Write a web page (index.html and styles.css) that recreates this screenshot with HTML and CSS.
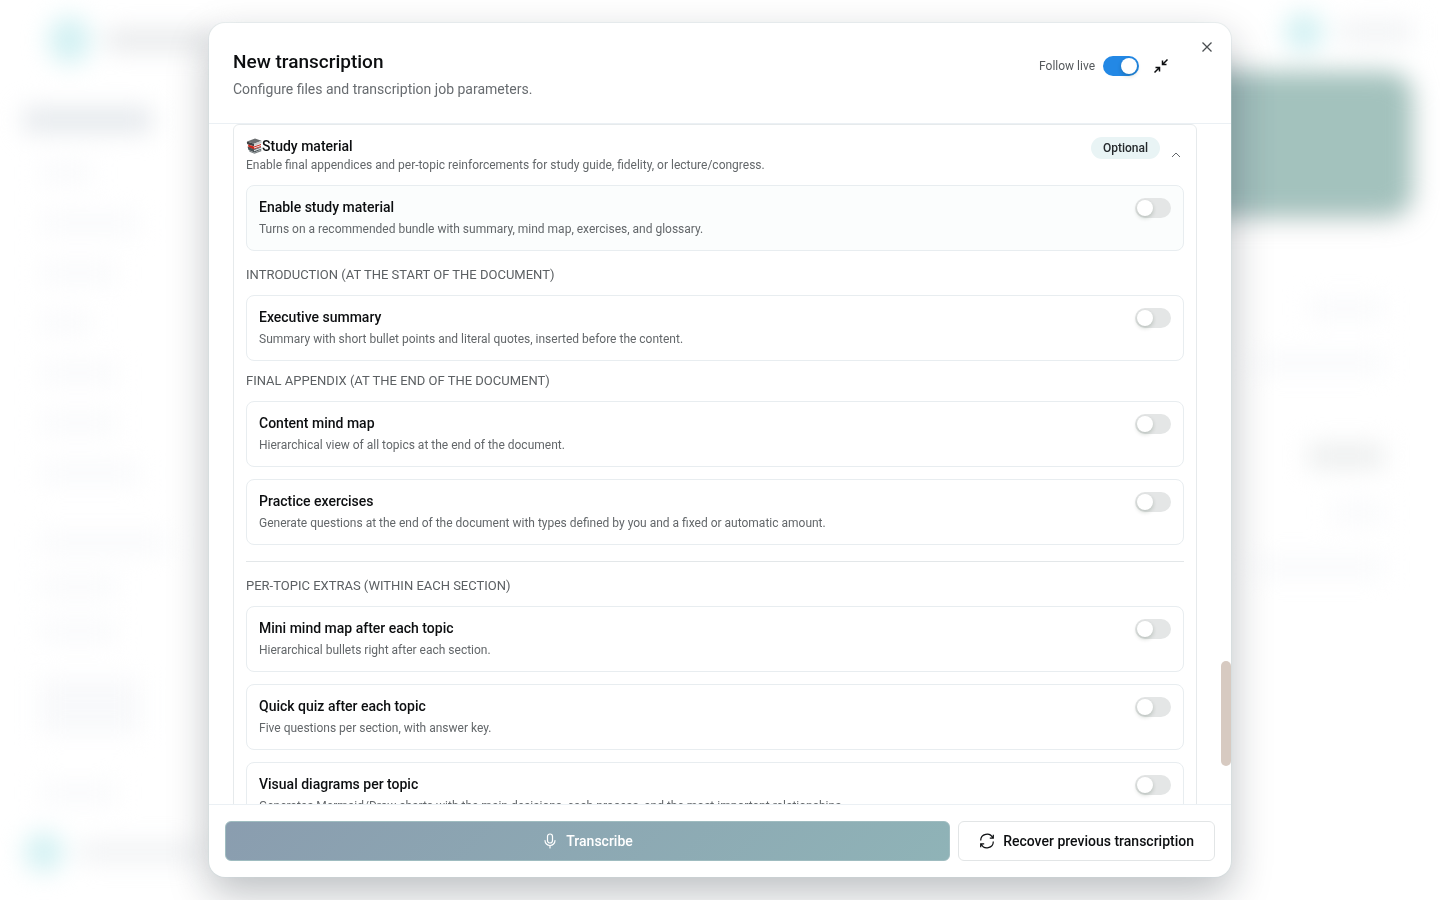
FILE: index.html
```html
<!DOCTYPE html>
<html lang="en">
<head>
    <meta charset="UTF-8">
    <meta name="viewport" content="width=device-width, initial-scale=1.0">
    <title>New transcription</title>
    <link rel="stylesheet" href="styles.css">
</head>
<body>

<!-- Page behind the dialog -->
<div class="page" aria-hidden="true">
    <div class="sidebar">
        <div class="brand"><span class="dot"></span><span class="bar strong"></span></div>
        <div class="nav">
            <span class="item active"></span>
            <span class="item short"></span>
            <span class="item long"></span>
            <span class="item"></span>
            <span class="item short"></span>
            <span class="item"></span>
            <span class="item"></span>
            <span class="item long"></span>
        </div>
        <div class="nav secondary">
            <span class="item wide"></span>
            <span class="item"></span>
            <span class="item"></span>
            <span class="item block"></span>
            <span class="item"></span>
        </div>
        <div class="user"><span class="dot small"></span><span class="bar"></span></div>
    </div>
    <div class="main">
        <div class="topbar"><span class="dot small"></span><span class="bar"></span></div>
        <div class="hero"></div>
        <div class="rows">
            <span class="item"></span>
            <span class="item wide"></span>
            <span class="item pill"></span>
            <span class="item short"></span>
            <span class="item wide"></span>
        </div>
    </div>
</div>

<!-- Dialog -->
<div class="overlay">
    <div class="modal" role="dialog" aria-modal="true" aria-labelledby="modal-title">
        <header class="modal-header">
            <div>
                <h1 id="modal-title">New transcription</h1>
                <p>Configure files and transcription job parameters.</p>
            </div>
            <div class="header-tools">
                <label for="follow">Follow live</label>
                <input type="checkbox" class="switch" id="follow" checked>
                <button class="icon-button" aria-label="Collapse">
                    <svg width="16" height="16" viewBox="0 0 16 16" fill="none" stroke="currentColor" stroke-width="1.5">
                        <path d="M14.5 1.5 9.5 6.5M9.5 2.5v4h4M1.5 14.5l5-5M2.5 9.5h4v4"/>
                    </svg>
                </button>
            </div>
            <button class="close-button" aria-label="Close">
                <svg width="12" height="12" viewBox="0 0 12 12" fill="none" stroke="currentColor" stroke-width="1.3">
                    <path d="M1.5 1.5l9 9M10.5 1.5l-9 9"/>
                </svg>
            </button>
        </header>

        <div class="modal-body">
            <section class="panel">
                <div class="panel-header">
                    <div>
                        <h2>
                            <svg width="16" height="16" viewBox="0 0 16 16">
                                <path d="M1 3.5 9 .5l6.5 2.2-7.5 3z" fill="#6b6e70"/>
                                <path d="M1 3.5 8 5.7v2.6L2 6.5C.8 6 .7 4.5 1 3.5z" fill="#3f4244"/>
                                <path d="M8 5.7l7.5-3v2.2L8.3 8z" fill="#c9cccd"/>
                                <path d="M2 6.5l6 2 7-2.5v2.7l-7 2.7-5.5-2z" fill="#c9281c"/>
                                <path d="M8 9.5l7-2.5v1l-7 2.5z" fill="#eee"/>
                                <path d="M1.5 8.6 8 11.3l7-2.3.3 2.5-7 3L2.5 12z" fill="#4a5357"/>
                                <path d="M8 12l7.3-2.5v1.2L8 13.3z" fill="#dfe2e3"/>
                                <path d="M3 12.2l5.3 2.3 7-2.8v1.5l-6.8 2.5-5-1.9z" fill="#7d8486"/>
                            </svg>Study material
                        </h2>
                        <p>Enable final appendices and per-topic reinforcements for study guide, fidelity, or lecture/congress.</p>
                    </div>
                    <div class="panel-side">
                        <span class="badge">Optional</span>
                        <button class="chevron" aria-label="Collapse section">
                            <svg width="10" height="6" viewBox="0 0 10 6" fill="none" stroke="currentColor"><path d="M1 5l4-4 4 4"/></svg>
                        </button>
                    </div>
                </div>

                <div class="card tinted">
                    <div>
                        <label for="study">Enable study material</label>
                        <p>Turns on a recommended bundle with summary, mind map, exercises, and glossary.</p>
                    </div>
                    <input type="checkbox" class="switch" id="study">
                </div>

                <div class="group">
                    <h3>Introduction (at the start of the document)</h3>
                    <div class="card">
                        <div>
                            <label for="summary">Executive summary</label>
                            <p>Summary with short bullet points and literal quotes, inserted before the content.</p>
                        </div>
                        <input type="checkbox" class="switch" id="summary">
                    </div>

                    <h3>Final appendix (at the end of the document)</h3>
                    <div class="card">
                        <div>
                            <label for="mindmap">Content mind map</label>
                            <p>Hierarchical view of all topics at the end of the document.</p>
                        </div>
                        <input type="checkbox" class="switch" id="mindmap">
                    </div>
                    <div class="card">
                        <div>
                            <label for="exercises">Practice exercises</label>
                            <p>Generate questions at the end of the document with types defined by you and a fixed or automatic amount.</p>
                        </div>
                        <input type="checkbox" class="switch" id="exercises">
                    </div>
                </div>

                <div class="group divided">
                    <h3>Per-topic extras (within each section)</h3>
                    <div class="card">
                        <div>
                            <label for="mini">Mini mind map after each topic</label>
                            <p>Hierarchical bullets right after each section.</p>
                        </div>
                        <input type="checkbox" class="switch" id="mini">
                    </div>
                    <div class="card">
                        <div>
                            <label for="quiz">Quick quiz after each topic</label>
                            <p>Five questions per section, with answer key.</p>
                        </div>
                        <input type="checkbox" class="switch" id="quiz">
                    </div>
                    <div class="card">
                        <div>
                            <label for="diagrams">Visual diagrams per topic</label>
                            <p>Generates Mermaid/Draw charts with the main decisions, each process, and the most important relationships.</p>
                        </div>
                        <input type="checkbox" class="switch" id="diagrams">
                    </div>
                </div>
            </section>
            <span class="scroll-thumb"></span>
        </div>

        <footer class="modal-footer">
            <button class="btn primary">
                <svg width="16" height="16" viewBox="0 0 16 16" fill="none" stroke="currentColor" stroke-width="1.2" stroke-linecap="round">
                    <rect x="5.5" y="1" width="5" height="9" rx="2.5"/>
                    <path d="M3 7.5a5 5 0 0 0 10 0M8 12.5V15"/>
                </svg>
                Transcribe
            </button>
            <button class="btn">
                <svg width="16" height="16" viewBox="0 0 16 16" fill="none" stroke="currentColor" stroke-width="1.2">
                    <path d="M1.7 7.5A6.3 6.3 0 0 1 13.8 5M14.3 1.7v3.5h-3.5M14.3 8.5A6.3 6.3 0 0 1 2.2 11M1.7 14.3v-3.5h3.5"/>
                </svg>
                Recover previous transcription
            </button>
        </footer>
    </div>
</div>

</body>
</html>
```
FILE: styles.css
```css
* {
    box-sizing: border-box;
}

body {
    margin: 0;
    height: 100vh;
    overflow: hidden;
    font-family: Roboto, "Liberation Sans", sans-serif;
    font-size: 14px;
    color: #0c0e10;
    background-color: #fff;
}

h1, h2, h3, p {
    margin: 0;
}

button {
    font: inherit;
    color: inherit;
    background: none;
    border: none;
    padding: 0;
    cursor: pointer;
}

svg {
    display: block;
    flex: none;
}

/* Blurred page */
.page {
    display: flex;
    height: 100vh;
    filter: blur(12px);
}

.sidebar {
    display: flex;
    flex-direction: column;
    width: 240px;
    padding: 16px 24px 28px;
}

.brand, .user, .topbar {
    display: flex;
    align-items: center;
    gap: 16px;
}

.brand {
    padding-left: 24px;
}

.user {
    margin-top: auto;
}

.dot {
    width: 48px;
    height: 48px;
    border-radius: 50%;
    background-color: #d3f1f3;
}

.dot.small {
    width: 40px;
    height: 40px;
}

.bar {
    width: 120px;
    height: 20px;
    background-color: #f0f2f4;
}

.topbar .bar {
    width: 72px;
}

.bar.strong {
    background-color: #e6e8ea;
}

.nav {
    display: flex;
    flex-direction: column;
    gap: 32px;
    padding-top: 44px;
}

.nav.secondary {
    gap: 26px;
    padding-top: 52px;
}

.item {
    width: 76px;
    height: 18px;
    margin-left: 16px;
    background-color: #f8f9fb;
}

.item.active {
    width: 128px;
    height: 24px;
    margin-left: 0;
    background-color: #e4e8ec;
}

.item.short {
    width: 52px;
}

.item.long {
    width: 100px;
}

.item.wide {
    width: 128px;
}

.item.block {
    width: 100px;
    height: 56px;
    margin-top: 12px;
    margin-bottom: 24px;
}

.main {
    flex: 1;
    padding: 12px 28px;
}

.topbar {
    justify-content: flex-end;
}

.hero {
    height: 144px;
    margin-top: 20px;
    border-radius: 24px;
    background: linear-gradient(90deg, #8da4b4 70%, #a3c2bd 88%);
    box-shadow: 0 4px 12px rgba(90, 60, 70, 0.2);
}

.rows {
    display: flex;
    flex-direction: column;
    align-items: flex-end;
    gap: 36px;
    padding: 84px 28px;
}

.item.pill {
    height: 24px;
    margin-top: 36px;
    background-color: #eceeee;
}

/* Dialog */
.overlay {
    position: fixed;
    inset: 0;
    display: flex;
    justify-content: center;
    padding: 23px;
}

.modal {
    display: flex;
    flex-direction: column;
    width: 100%;
    max-width: 1022px;
    overflow: hidden;
    background-color: #fff;
    border-radius: 16px;
    box-shadow: 0 0 0 1px rgba(200, 215, 220, 0.3), 0 16px 40px rgba(15, 25, 35, 0.28);
}

.modal-header {
    position: relative;
    display: flex;
    justify-content: space-between;
    align-items: flex-start;
    padding: 25px 56px 22px 24px;
    border-bottom: 1px solid #ebf0f4;
}

h1 {
    font-size: 19px;
    line-height: 28px;
    font-weight: 500;
}

.modal-header p {
    padding-top: 1px;
    font-size: 14px;
    line-height: 24px;
    color: #686c70;
}

.header-tools {
    display: flex;
    align-items: center;
    gap: 8px;
    padding-top: 4px;
    font-size: 12px;
    color: #55595c;
}

.icon-button {
    padding: 6px;
    color: #0c0e10;
}

.close-button {
    position: absolute;
    top: 18px;
    right: 18px;
    color: #4a4e51;
}

.switch {
    appearance: none;
    flex: none;
    width: 36px;
    height: 20px;
    margin: 0;
    padding: 2px;
    border-radius: 10px;
    background-color: #e4e6e6;
    cursor: pointer;
}

.switch::before {
    content: "";
    display: block;
    width: 16px;
    height: 16px;
    border-radius: 50%;
    background-color: #fff;
    box-shadow: 0 2px 4px rgba(0, 35, 11, 0.2);
}

.switch:checked {
    background-color: #2388e5;
}

.switch:checked::before {
    margin-left: 16px;
}

.modal-body {
    position: relative;
    flex: 1;
    min-height: 0;
    overflow: hidden;
    padding: 0 34px 0 24px;
}

.panel {
    padding: 12px;
    border: 1px solid #e6eaec;
    border-radius: 6px;
}

.panel-header {
    display: flex;
    justify-content: space-between;
    padding-bottom: 10px;
}

h2 {
    display: flex;
    align-items: center;
    font-size: 14px;
    line-height: 18px;
    font-weight: 500;
}

.panel-header p {
    font-size: 12px;
    line-height: 20px;
    color: #63676a;
}

.panel-side {
    display: flex;
    align-items: flex-start;
    gap: 8px;
}

.badge {
    padding: 0 12px;
    border-radius: 11px;
    font-size: 12px;
    line-height: 22px;
    font-weight: 500;
    color: #25292c;
    background-color: #e9f4f5;
}

.chevron {
    padding: 15px 3px 0;
    color: #63676a;
}

.card {
    display: flex;
    justify-content: space-between;
    align-items: flex-start;
    padding: 12px;
    border: 1px solid #e8edf0;
    border-radius: 8px;
}

.card.tinted {
    background-color: #fbfdfd;
}

.card > div {
    display: flex;
    flex-direction: column;
    gap: 5px;
    padding-bottom: 1px;
}

.card label {
    line-height: 18px;
    font-weight: 500;
}

.card p {
    font-size: 12px;
    line-height: 16px;
    color: #63676a;
}

.group {
    display: flex;
    flex-direction: column;
    gap: 12px;
    margin-top: 16px;
}

.group.divided {
    padding-top: 16px;
    border-top: 1px solid #e3e7e9;
}

h3 {
    font-size: 13px;
    line-height: 16px;
    font-weight: 400;
    text-transform: uppercase;
    color: #5c6063;
}

.scroll-thumb {
    position: absolute;
    top: 79%;
    right: 0;
    width: 10px;
    height: 105px;
    border-radius: 5px;
    background-color: #d7cac1;
}

.modal-footer {
    display: flex;
    gap: 8px;
    padding: 16px;
    border-top: 1px solid #ebf0f4;
}

.btn {
    display: flex;
    align-items: center;
    justify-content: center;
    gap: 8px;
    height: 40px;
    padding: 0 20px;
    font-weight: 500;
    border: 1px solid #e2e5e6;
    border-radius: 6px;
}

.btn.primary {
    flex: 1;
    color: #fff;
    border-color: #9fbcc0;
    background: linear-gradient(135deg, #8a9daf, #8fb3b7);
}
```
